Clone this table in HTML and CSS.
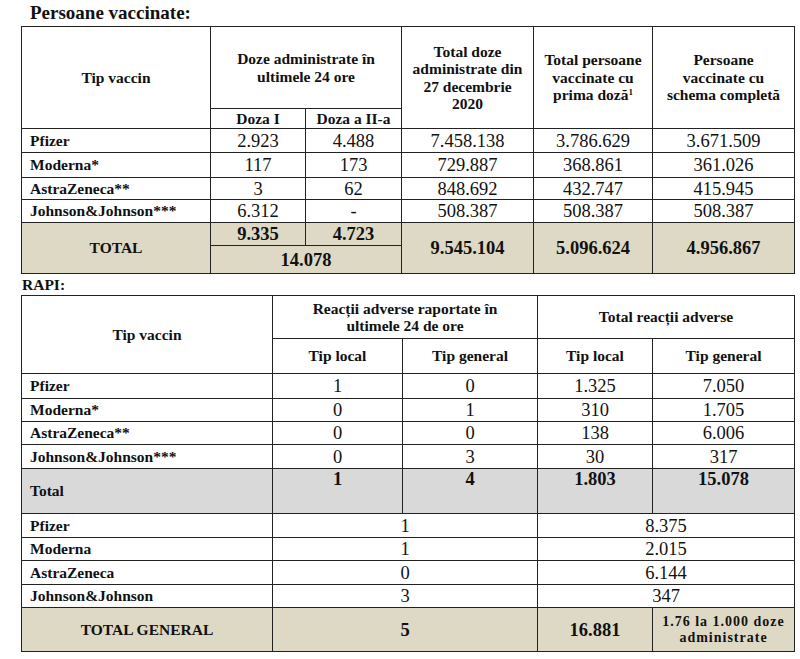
FILE: index.html
```html
<!DOCTYPE html>
<html lang="ro">
<head>
<meta charset="utf-8">
<title>Persoane vaccinate</title>
<link rel="stylesheet" href="styles.css">
</head>
<body>
<div class="page">
  <h1 class="title">Persoane vaccinate:</h1>
  <table class="grid">
    <colgroup>
      <col class="w189"><col class="w95"><col class="w96"><col class="w132"><col class="w119"><col class="w142">
    </colgroup>
    <tr class="h82">
      <th rowspan="2">Tip vaccin</th>
      <th colspan="2">Doze administrate în<br>ultimele 24 ore</th>
      <th rowspan="2">Total doze<br>administrate din<br>27 decembrie<br>2020</th>
      <th rowspan="2">Total persoane<br>vaccinate cu<br>prima doză<sup>1</sup></th>
      <th rowspan="2">Persoane<br>vaccinate cu<br>schema completă</th>
    </tr>
    <tr class="h20">
      <th>Doza I</th><th>Doza a II-a</th>
    </tr>
    <tr class="h24"><th class="name">Pfizer</th><td>2.923</td><td>4.488</td><td>7.458.138</td><td>3.786.629</td><td>3.671.509</td></tr>
    <tr class="h25"><th class="name">Moderna*</th><td>117</td><td>173</td><td>729.887</td><td>368.861</td><td>361.026</td></tr>
    <tr class="h22"><th class="name">AstraZeneca**</th><td>3</td><td>62</td><td>848.692</td><td>432.747</td><td>415.945</td></tr>
    <tr class="h23"><th class="name">Johnson&amp;Johnson***</th><td>6.312</td><td>-</td><td>508.387</td><td>508.387</td><td>508.387</td></tr>
    <tr class="h23 tan">
      <th rowspan="2">TOTAL</th>
      <td class="strong">9.335</td><td class="strong">4.723</td>
      <td rowspan="2" class="strong">9.545.104</td>
      <td rowspan="2" class="strong">5.096.624</td>
      <td rowspan="2" class="strong">4.956.867</td>
    </tr>
    <tr class="h28 tan"><td colspan="2" class="strong">14.078</td></tr>
  </table>

  <div class="label">RAPI:</div>

  <table class="grid">
    <colgroup>
      <col class="w251"><col class="w130"><col class="w135"><col class="w115"><col class="w142">
    </colgroup>
    <tr class="h43">
      <th rowspan="2">Tip vaccin</th>
      <th colspan="2">Reacții adverse raportate în<br>ultimele 24 de ore</th>
      <th colspan="2">Total reacții adverse</th>
    </tr>
    <tr class="h35">
      <th>Tip local</th><th>Tip general</th><th>Tip local</th><th>Tip general</th>
    </tr>
    <tr class="h25"><th class="name">Pfizer</th><td>1</td><td>0</td><td>1.325</td><td>7.050</td></tr>
    <tr class="h23"><th class="name">Moderna*</th><td>0</td><td>1</td><td>310</td><td>1.705</td></tr>
    <tr class="h23"><th class="name">AstraZeneca**</th><td>0</td><td>0</td><td>138</td><td>6.006</td></tr>
    <tr class="h24"><th class="name">Johnson&amp;Johnson***</th><td>0</td><td>3</td><td>30</td><td>317</td></tr>
    <tr class="h45 grey">
      <th class="name">Total</th>
      <td class="strong top">1</td><td class="strong top">4</td><td class="strong top">1.803</td><td class="strong top">15.078</td>
    </tr>
    <tr class="h24"><th class="name">Pfizer</th><td colspan="2">1</td><td colspan="2">8.375</td></tr>
    <tr class="h23"><th class="name">Moderna</th><td colspan="2">1</td><td colspan="2">2.015</td></tr>
    <tr class="h24"><th class="name">AstraZeneca</th><td colspan="2">0</td><td colspan="2">6.144</td></tr>
    <tr class="h23"><th class="name">Johnson&amp;Johnson</th><td colspan="2">3</td><td colspan="2">347</td></tr>
    <tr class="h44 tan">
      <th>TOTAL GENERAL</th>
      <td colspan="2" class="strong">5</td>
      <td class="strong">16.881</td>
      <td class="small">1.76 la 1.000 doze<br>administrate</td>
    </tr>
  </table>
</div>
</body>
</html>
```

FILE: styles.css
```css
html, body {
  margin: 0;
  padding: 0;
  background: #ffffff;
}

body {
  font-family: "Liberation Serif", "Times New Roman", serif;
  color: #111111;
}

.page {
  padding-left: 21px;
  width: 774px;
}

.title {
  margin: 0;
  padding-left: 9px;
  font-size: 19px;
  line-height: 26px;
  font-weight: bold;
}

.label {
  padding-left: 1px;
  font-size: 15.5px;
  font-weight: bold;
  line-height: 21px;
}

.grid {
  width: 774px;
  border-collapse: collapse;
  table-layout: fixed;
}

.grid th,
.grid td {
  border: 1px solid #222222;
  padding: 0 6px;
  text-align: center;
  vertical-align: middle;
}

.grid th {
  font-size: 15.5px;
  line-height: 17.5px;
  font-weight: bold;
}

.grid td {
  font-size: 18.5px;
  line-height: 20px;
  font-weight: normal;
}

.grid th.name {
  text-align: left;
  padding-left: 8px;
}

.grid td.strong {
  font-weight: bold;
}

.grid td.top {
  vertical-align: top;
}

.grid td.small {
  font-size: 14px;
  line-height: 16px;
  font-weight: bold;
  letter-spacing: 1px;
  padding: 0 2px;
}

sup {
  font-size: 9px;
  line-height: 0;
  vertical-align: 5px;
}

.tan > th,
.tan > td {
  background: #ddd9c4;
}

.grey > th,
.grey > td {
  background: #d9d9d9;
}

.w189 { width: 189px; }
.w95 { width: 95px; }
.w96 { width: 96px; }
.w132 { width: 132px; }
.w119 { width: 119px; }
.w142 { width: 142px; }
.w251 { width: 251px; }
.w130 { width: 130px; }
.w135 { width: 135px; }
.w115 { width: 115px; }

.h20 { height: 20px; }
.h22 { height: 22px; }
.h23 { height: 23px; }
.h24 { height: 24px; }
.h25 { height: 25px; }
.h28 { height: 28px; }
.h35 { height: 35px; }
.h43 { height: 43px; }
.h44 { height: 44px; }
.h45 { height: 45px; }
.h82 { height: 82px; }
```
